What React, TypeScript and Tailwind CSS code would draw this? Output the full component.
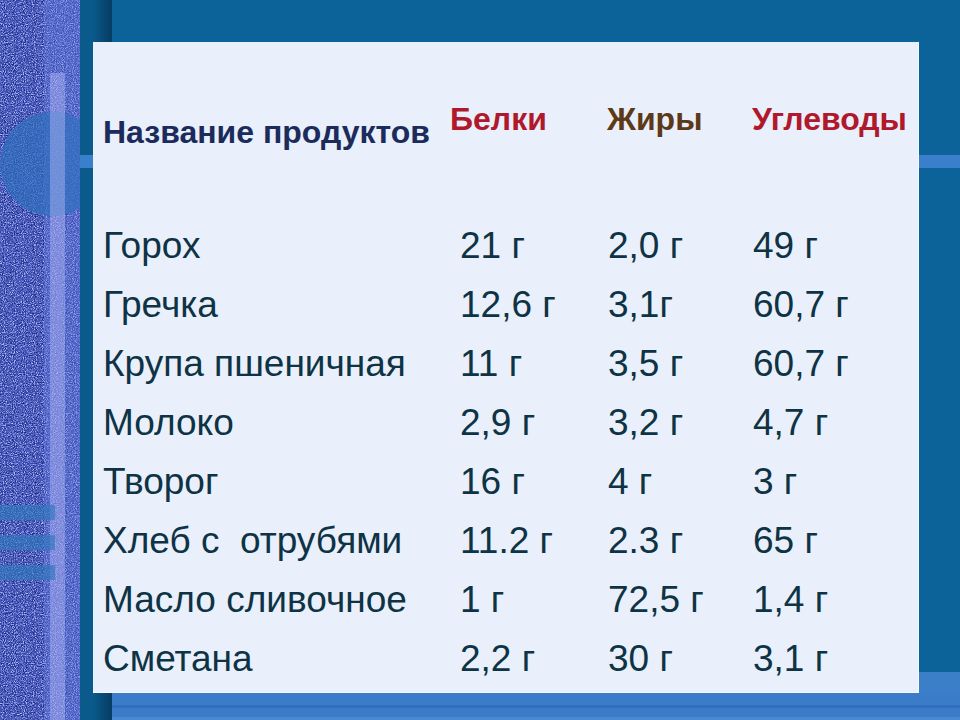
import React from 'react';

const rows = [
  ['Горох', '21 г', '2,0 г', '49 г'],
  ['Гречка', '12,6 г', '3,1г', '60,7 г'],
  ['Крупа пшеничная', '11 г', '3,5 г', '60,7 г'],
  ['Молоко', '2,9 г', '3,2 г', '4,7 г'],
  ['Творог', '16 г', '4 г', '3 г'],
  ['Хлеб с  отрубями', '11.2 г', '2.3 г', '65 г'],
  ['Масло сливочное', '1 г', '72,5 г', '1,4 г'],
  ['Сметана', '2,2 г', '30 г', '3,1 г'],
];

function TexturedStrip() {
  return (
    <svg width="80" height="720" viewBox="0 0 80 720" className="block shrink-0">
      <defs>
        <filter id="noise" x="0" y="0" width="100%" height="100%" colorInterpolationFilters="sRGB">
          <feTurbulence type="fractalNoise" baseFrequency="0.9" numOctaves="2" seed="7" />
          <feColorMatrix
            type="matrix"
            values="0.33 0.33 0.33 0 0  0.33 0.33 0.33 0 0  0.33 0.33 0.33 0 0  0 0 0 0 1"
          />
          <feComponentTransfer>
            <feFuncR type="table" tableValues="0.05 0.05 0.08 0.12 0.3 0.65 0.78 0.8 0.8" />
            <feFuncG type="table" tableValues="0.1 0.1 0.13 0.18 0.36 0.7 0.8 0.84 0.84" />
            <feFuncB type="table" tableValues="0.35 0.35 0.4 0.5 0.75 0.97 1 1 1" />
          </feComponentTransfer>
        </filter>
      </defs>
      <rect x="0" y="0" width="80" height="720" fill="#5b6fc9" />
      <rect x="0" y="0" width="80" height="720" filter="url(#noise)" />
      {/* lighter band on the right of the strip */}
      <rect x="44" y="0" width="36" height="720" fill="#6c82e4" opacity="0.4" />
      {/* circle */}
      <circle cx="52" cy="164" r="52" fill="#2f6fbd" opacity="0.7" />
      {/* vertical light stripe */}
      <rect x="50" y="73" width="15" height="647" fill="#b3b9f6" opacity="0.45" />
      {/* horizontal bars */}
      <rect x="0" y="505" width="55" height="15" fill="#2f78bd" opacity="0.65" />
      <rect x="0" y="535" width="55" height="15" fill="#2f78bd" opacity="0.65" />
      <rect x="0" y="565" width="55" height="15" fill="#2f78bd" opacity="0.65" />
    </svg>
  );
}

export default function App() {
  return (
    <div className="w-[960px] h-[720px] flex overflow-hidden bg-[#0b6399] font-['Liberation_Sans',Arial,sans-serif]">
      <TexturedStrip />

      {/* dark vertical strip */}
      <div className="w-[13px] h-full bg-[#0a5a8b] flex flex-col shrink-0">
        <div className="h-[155px]" />
        <div className="h-[13px] bg-[#3a7fcc]" />
      </div>

      <div className="flex-1 flex flex-col">
        {/* top band */}
        <div className="h-[42px] flex">
          <div className="w-[19px] bg-gradient-to-r from-[#0a5a8b] to-[#063c62]" />
          <div className="flex-1 bg-[#0b6399]" />
        </div>

        <div className="flex">
          {/* panel */}
          <div className="w-[826px] h-[651px] bg-[#e9effb] border-r border-b border-r-[#f6f8fe] border-b-[#f6f8fe] pl-[10px]">
            <div className="grid grid-cols-[347px_157px_145px_1fr] h-[174px] font-bold text-[32px] leading-[32px] whitespace-nowrap">
              <div className="pt-[74px] text-[#1b2b5c]">Название продуктов</div>
              <div className="pt-[61px] text-[#b0192b]">Белки</div>
              <div className="pt-[61px] text-[#5c3a17]">Жиры</div>
              <div className="pt-[61px] text-[#b0192b]">Углеводы</div>
            </div>
            {rows.map((r) => (
              <div
                key={r[0]}
                className="grid grid-cols-[357px_148px_145px_1fr] h-[59px] text-[37px] leading-[59px] text-[#0e3344] whitespace-pre"
              >
                <div>{r[0]}</div>
                <div>{r[1]}</div>
                <div>{r[2]}</div>
                <div>{r[3]}</div>
              </div>
            ))}
          </div>

          {/* right column */}
          <div className="flex-1 flex flex-col">
            <div className="h-[113px]" />
            <div className="h-[13px] bg-[#3a7fcc]" />
            <div className="flex-1" />
            <div className="h-[21px] bg-[#3a7fc8]" />
          </div>
        </div>

        {/* bottom band */}
        <div className="flex-1 flex">
          <div className="w-[19px] bg-gradient-to-r from-[#0a5a8b] to-[#063c62]" />
          <div className="flex-1 bg-[#3a7cc8] border-t-[12px] border-t-[#3a7cc8] border-b-[3px] border-b-[#4a88d2]">
            <div className="h-[3px] bg-[#2f6fbe]" />
          </div>
        </div>
      </div>
    </div>
  );
}
